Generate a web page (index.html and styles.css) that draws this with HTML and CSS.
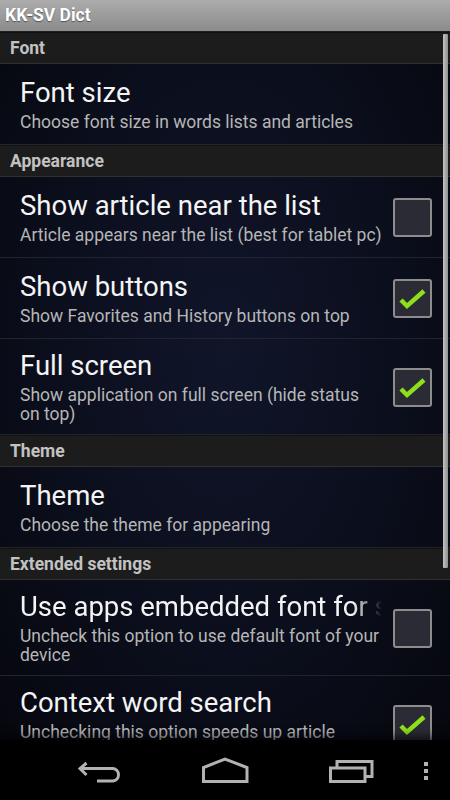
FILE: index.html
```html
<!DOCTYPE html>
<html>
<head>
    <meta charset="utf-8">
    <meta name="viewport" content="width=device-width, initial-scale=1">
    <title>KK-SV Dict</title>
    <link rel="stylesheet" href="styles.css">
</head>
<body>
    <header class="titlebar">KK-SV Dict</header>

    <main class="prefs">
        <div class="scrollbar"></div>

        <div class="category">Font</div>
        <div class="pref">
            <div class="pref-text">
                <div class="pref-title">Font size</div>
                <div class="pref-summary">Choose font size in words lists and articles</div>
            </div>
        </div>

        <div class="category">Appearance</div>
        <div class="pref">
            <div class="pref-text">
                <div class="pref-title">Show article near the list</div>
                <div class="pref-summary">Article appears near the list (best for tablet pc)</div>
            </div>
            <div class="checkbox"></div>
        </div>
        <div class="pref">
            <div class="pref-text">
                <div class="pref-title">Show buttons</div>
                <div class="pref-summary">Show Favorites and History buttons on top</div>
            </div>
            <div class="checkbox checked">
                <svg viewBox="0 0 39 39" width="39" height="39"><polyline points="8,21 14,27 31,12" /></svg>
            </div>
        </div>
        <div class="pref">
            <div class="pref-text">
                <div class="pref-title">Full screen</div>
                <div class="pref-summary">Show application on full screen (hide status on top)</div>
            </div>
            <div class="checkbox checked">
                <svg viewBox="0 0 39 39" width="39" height="39"><polyline points="8,21 14,27 31,12" /></svg>
            </div>
        </div>

        <div class="category">Theme</div>
        <div class="pref">
            <div class="pref-text">
                <div class="pref-title">Theme</div>
                <div class="pref-summary">Choose the theme for appearing</div>
            </div>
        </div>

        <div class="category">Extended settings</div>
        <div class="pref">
            <div class="pref-text">
                <div class="pref-title faded">Use apps embedded font for showing articles</div>
                <div class="pref-summary">Uncheck this option to use default font of your device</div>
            </div>
            <div class="checkbox"></div>
        </div>
        <div class="pref">
            <div class="pref-text">
                <div class="pref-title">Context word search</div>
                <div class="pref-summary">Unchecking this option speeds up article opening</div>
            </div>
            <div class="checkbox checked">
                <svg viewBox="0 0 39 39" width="39" height="39"><polyline points="8,21 14,27 31,12" /></svg>
            </div>
        </div>
    </main>

    <nav class="navbar">
        <!-- back, home, recent apps -->
        <svg class="nav-icon" viewBox="0 0 50 30" width="50" height="30">
            <path d="M11.5 8 L5 13.5 L11.5 20 M5 13.5 H38 A6.3 6.3 0 0 1 38 26 H22" />
        </svg>
        <svg class="nav-icon" viewBox="0 0 50 30" width="50" height="30">
            <path d="M1.5 26.5 V12.5 L23 4 L45 12.5 V26.5 Z" />
        </svg>
        <svg class="nav-icon" viewBox="0 0 50 30" width="50" height="30">
            <path d="M8 12 V6.5 H43 V21.5 H37" />
            <rect x="1.5" y="13" width="34.5" height="13.5" />
        </svg>
        <div class="menu-dots"><span></span><span></span><span></span></div>
    </nav>
</body>
</html>
```

FILE: styles.css
```css
body {
    margin: 0;
    width: 450px;
    height: 800px;
    overflow: hidden;
    display: flex;
    flex-direction: column;
    font-family: Roboto, "Noto Sans", sans-serif;
    background-color: #000;
    color: #f2f2f2;
}

.titlebar {
    flex: none;
    height: 31px;
    line-height: 31px;
    padding-left: 5px;
    border-bottom: 1px solid #1e1e1e;
    background: linear-gradient(#acacac, #8b8b8b);
    font-size: 17.5px;
    font-weight: bold;
    color: #fff;
    text-shadow: 0 1px 1px rgba(0,0,0,0.45);
}

.prefs {
    position: relative;
    flex: 1;
    overflow: hidden;
    background: radial-gradient(ellipse at 50% 45%, #10152a 0%, #0b0e1c 55%, #06070e 100%);
}

.scrollbar {
    position: absolute;
    top: 2px;
    left: 443px;
    width: 5px;
    height: 534px;
    border-radius: 1px;
    background: linear-gradient(90deg, #c4c4c4, #8e8e8e);
}

.category {
    height: 30px;
    line-height: 30px;
    padding-left: 10px;
    background-color: #1c1c1c;
    border-top: 1px solid #111;
    border-bottom: 1px solid #303030;
    font-size: 17.5px;
    font-weight: bold;
    color: #c2c2c2;
}

.pref {
    box-sizing: border-box;
    min-height: 81px;
    display: flex;
    align-items: center;
    padding: 11px 18px 10px 20px;
    border-bottom: 1px solid #22242c;
}

.pref-text {
    flex: 1;
    min-width: 0;
}

.pref-title {
    font-size: 27.5px;
    line-height: 32px;
    white-space: nowrap;
    overflow: hidden;
    color: #f4f4f4;
}

.pref-title.faded {
    -webkit-mask-image: linear-gradient(90deg, #000 92%, transparent 100%);
    mask-image: linear-gradient(90deg, #000 92%, transparent 100%);
}

.pref-summary {
    margin-top: 4px;
    font-size: 17.5px;
    line-height: 19px;
    color: #b6b6b6;
}

.checkbox {
    flex: none;
    width: 35px;
    height: 35px;
    margin-left: 11px;
    border: 2px solid #8d8d8d;
    border-radius: 3px;
    background-color: #2a2b34;
    position: relative;
}

.checkbox svg {
    position: absolute;
    top: -2px;
    left: -2px;
}

.checkbox polyline {
    fill: none;
    stroke: #8ee01c;
    stroke-width: 4.5;
    stroke-linejoin: miter;
}

.navbar {
    height: 60px;
    flex: none;
    display: flex;
    align-items: center;
    padding-left: 75px;
    gap: 77px;
    background-color: #000;
    position: relative;
    box-shadow: 0 -4px 8px rgba(0,0,0,0.6);
}

.nav-icon path,
.nav-icon rect {
    fill: none;
    stroke: #b2b2b2;
    stroke-width: 3;
}

.menu-dots {
    position: absolute;
    right: 22px;
    top: 22px;
    display: flex;
    flex-direction: column;
    gap: 3px;
}

.menu-dots span {
    width: 4px;
    height: 4px;
    background-color: #b2b2b2;
}
```
